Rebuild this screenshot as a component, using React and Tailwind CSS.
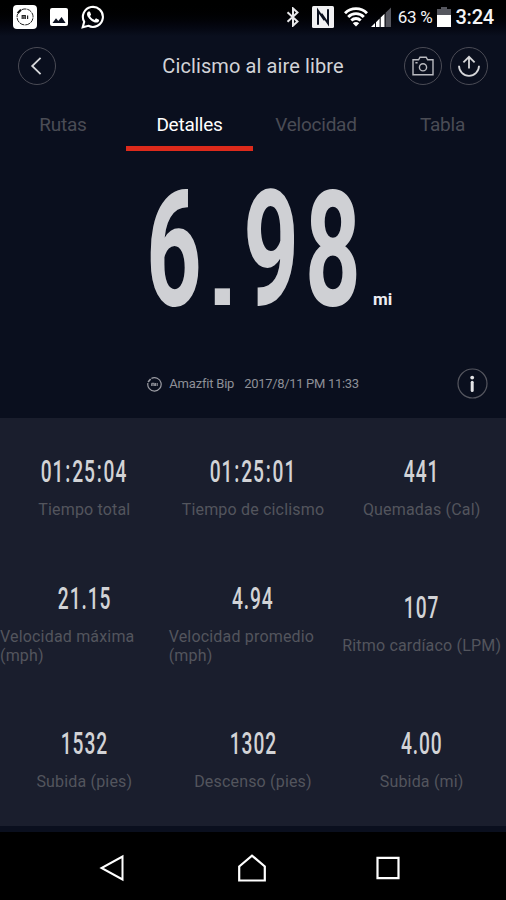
const TABS = ['Rutas', 'Detalles', 'Velocidad', 'Tabla'];

const STATS = [
  { value: '01:25:04', label: 'Tiempo total' },
  { value: '01:25:01', label: 'Tiempo de ciclismo' },
  { value: '441', label: 'Quemadas (Cal)' },
  { value: '21.15', label: 'Velocidad máxima (mph)' },
  { value: '4.94', label: 'Velocidad promedio (mph)' },
  { value: '107', label: 'Ritmo cardíaco (LPM)' },
  { value: '1532', label: 'Subida (pies)' },
  { value: '1302', label: 'Descenso (pies)' },
  { value: '4.00', label: 'Subida (mi)' },
];

function MiFitIcon() {
  return (
    <svg className="w-6 h-6" viewBox="0 0 24 24" fill="none">
      <rect width="24" height="24" rx="4" fill="#fff" />
      <path d="M8.6 4.7A8 8 0 1 1 4.6 9" stroke="#222" strokeWidth="1" strokeDasharray="5 .8" />
      <path d="M4.6 8.2 8 4.8" stroke="#111" strokeWidth="2" />
      <path d="M9.2 14v-3.4h3.1V14M10.8 11.6V14M14.6 10.4V14" stroke="#222" strokeWidth="1.2" />
    </svg>
  );
}

function StatusBar() {
  return (
    <div className="flex h-9 items-center justify-between bg-gradient-to-b from-black to-[#0a0f1e] pb-0.5 pl-[13px] pr-3">
      <div className="flex items-center">
        <MiFitIcon />
        <svg className="ml-[13px] w-[18px] h-[18px]" viewBox="0 0 18 18">
          <rect width="18" height="18" rx="2" fill="#fff" />
          <path d="M2.5 15 6 10.2l2.3 2.7L11.6 9l4 6z" fill="#0a0f1e" />
        </svg>
        <svg className="ml-[13px] w-6 h-6" viewBox="0 0 24 24" fill="#fff">
          <path d="M17.472 14.382c-.297-.149-1.758-.867-2.03-.967-.273-.099-.471-.148-.67.15-.197.297-.767.966-.94 1.164-.173.199-.347.223-.644.075-.297-.15-1.255-.463-2.39-1.475-.883-.788-1.48-1.761-1.653-2.059-.173-.297-.018-.458.13-.606.134-.133.298-.347.446-.52.149-.174.198-.298.298-.497.099-.198.05-.371-.025-.52-.075-.149-.669-1.612-.916-2.207-.242-.579-.487-.5-.669-.51-.173-.008-.371-.01-.57-.01-.198 0-.52.074-.792.372-.272.297-1.04 1.016-1.04 2.479 0 1.462 1.065 2.875 1.213 3.074.149.198 2.096 3.2 5.077 4.487.709.306 1.262.489 1.694.625.712.227 1.36.195 1.871.118.571-.085 1.758-.719 2.006-1.413.248-.694.248-1.289.173-1.413-.074-.124-.272-.198-.57-.347" />
          <path d="M3.2 16.8A10 10 0 1 1 7.4 20.8L1.7 22.3z" fill="none" stroke="#fff" strokeWidth="2.1" />
        </svg>
      </div>

      <div className="flex items-center text-[#f4f4f6]">
        <svg className="w-3.5 h-5" viewBox="0 0 14 20" fill="none" stroke="#e8e8ea" strokeWidth="2">
          <path d="M1.5 5.2 11.5 14.4 7 18.6V1.4l4.5 4.2L1.5 14.8" />
        </svg>
        <svg className="ml-3 w-[22px] h-[22px]" viewBox="0 0 22 22">
          <rect width="22" height="22" rx="1.5" fill="#f1f1f3" />
          <path d="M6 18.8V4.6l6.6 9.6M16 3.2v14.2L9.4 7.8" fill="none" stroke="#0a0f1e" strokeWidth="2" />
        </svg>
        <svg className="ml-2.5 w-6 h-5" viewBox="0 0 24 20" fill="none" stroke="#fff" strokeWidth="2.9">
          <path d="M1 6.2a15.6 15.6 0 0 1 22 0M4.2 9.9a11 11 0 0 1 15.6 0M7.3 13.5a6.7 6.7 0 0 1 9.4 0" />
          <path d="M12 19.5 8.8 16.2a4.6 4.6 0 0 1 6.4 0z" fill="#fff" stroke="none" />
        </svg>
        <svg className="ml-[3px] w-5 h-5" viewBox="0 0 20 20" fill="#fff">
          <path d="M0 20l4-4v4zM5 15.2l3.6-3.6V20H5zM9.7 10.6l3.8-3.8V20H9.7z" />
          <path d="M14.6 5.8 20 .6V20h-5.4z" fill="#55565e" />
        </svg>
        <span className="ml-[7px] text-[17px] leading-5 tracking-[-0.3px]">63 %</span>
        <svg className="ml-[5px] w-3.5 h-5" viewBox="0 0 14 20">
          <path d="M4 0h6v2h4v7H0V2h4z" fill="#55565e" />
          <path d="M0 8h14v12H0z" fill="#fff" />
        </svg>
        <span className="ml-[4px] text-[20px] font-medium leading-5 tracking-[-0.2px]">3:24</span>
      </div>
    </div>
  );
}

function RoundButton({ children }) {
  return (
    <button className="flex h-[38px] w-[38px] items-center justify-center rounded-full border border-[#4a4b55] text-[#d6d7da]">
      {children}
    </button>
  );
}

function Header() {
  return (
    <div className="grid h-[60px] grid-cols-[94px_1fr_94px] items-center pb-px pl-[18px] pr-[18px]">
      <RoundButton>
        <svg className="w-5 h-5" viewBox="0 0 20 20" fill="none" stroke="currentColor" strokeWidth="1.8">
          <path d="M13.6 1.8 5.2 10l8.4 8.2" />
        </svg>
      </RoundButton>
      <h1 className="pt-px text-center text-[20px] leading-6 tracking-[0.1px] text-[#d2d3d7]">Ciclismo al aire libre</h1>
      <div className="flex justify-end gap-2">
        <RoundButton>
          <svg className="w-[22px] h-[20px] shrink-0" viewBox="0 0 22 20" fill="none" stroke="#b9bac0" strokeWidth="1.4">
            <path d="M1 3.8h5.6L8 1.2h6.2l1.4 2.6H21v15H1zM3.4 6.7h2.2" />
            <circle cx="11" cy="11.3" r="3.6" />
          </svg>
        </RoundButton>
        <RoundButton>
          <svg className="w-[22px] h-[22px] shrink-0" viewBox="0 0 22 22" fill="none" stroke="currentColor" strokeWidth="1.8">
            <path d="M1 10.8a10 10 0 0 0 20 0M11 13.4V2M5.4 7.4 11 1.8l5.6 5.6" />
          </svg>
        </RoundButton>
      </div>
    </div>
  );
}

function Tabs({ active }) {
  return (
    <div className="grid h-[55px] grid-cols-[126px_127px_126px_127px]">
      {TABS.map((tab) => (
        <div
          key={tab}
          className={`border-b-5 pt-[17px] text-center text-[19px] leading-6 tracking-[-0.25px] ${
            tab === active ? 'border-[#dd2a1b] text-white' : 'border-transparent text-[#4a4c55]'
          }`}
        >
          {tab}
        </div>
      ))}
    </div>
  );
}

function Distance() {
  return (
    <div className="flex h-[199px] items-start pl-[146px]">
      <div className="w-[220px] whitespace-nowrap pt-[18px]">
        <span className="inline-block origin-left scale-x-[0.6] text-[162px] font-bold leading-[162px] tracking-[10px] text-[#cfd0d4]">
          6
          <span className="ml-[9px] mr-[19px] inline-block scale-x-[1.6] font-['Liberation_Sans'] text-[112px] leading-none tracking-normal">.</span>
          98
        </span>
      </div>
      <span className="ml-[7px] mt-[136px] text-[17px] font-bold leading-6 text-[#eeeef2]">mi</span>
    </div>
  );
}

function Source() {
  return (
    <div className="grid h-[68px] grid-cols-[1fr_auto_1fr] items-center text-[13px] leading-4 text-[#8e9097]">
      <span />
      <div className="flex items-center">
        <svg className="w-[15px] h-[15px]" viewBox="0 0 15 15" fill="none" stroke="#9c9da4">
          <path d="M4.4 1.4A6.7 6.7 0 1 1 .9 6" strokeWidth="1.2" />
          <path d="M1.1 4.9 3.6 2" strokeWidth="1.6" />
          <path d="M4.7 9V6.3h2.6V9M6 7v2M8.6 6v3M10.2 6v3" strokeWidth="1" />
        </svg>
        <span className="ml-[7px] tracking-[-0.2px]">Amazfit Bip</span>
        <span className="ml-2.5 tracking-[-0.32px]">2017/8/11 PM 11:33</span>
      </div>
      <div className="flex justify-end pb-px pr-[18px]">
        <svg className="w-[31px] h-[31px]" viewBox="0 0 31 31" fill="none">
          <circle cx="15.5" cy="15.5" r="14.5" stroke="#55565f" strokeWidth="1.2" />
          <circle cx="15.2" cy="9.6" r="1.9" fill="#e4e4e7" />
          <path d="M15.2 14.2v8.2" stroke="#e4e4e7" strokeWidth="3" strokeLinecap="round" />
        </svg>
      </div>
    </div>
  );
}

function StatValue({ value }) {
  return (
    <span className="inline-block scale-x-[0.6] whitespace-nowrap text-[32px] font-medium leading-[38px] tracking-[1.5px] text-[#d2d3d6]">
      {value.split('').map((ch, i) => (
        <span key={i} className={ch === ':' ? 'mx-[1.5px]' : ''}>{ch}</span>
      ))}
    </span>
  );
}

function StatsGrid() {
  return (
    <div className="grid h-[408px] grid-cols-3 grid-rows-3 bg-[#1a1e2d]">
      {STATS.map((stat) => (
        <div key={stat.label + stat.value} className="flex flex-col items-center justify-center gap-2.5 pb-px">
          <StatValue value={stat.value} />
          <span className="text-[16px] leading-[19px] tracking-[0.18px] text-[#53555d]">{stat.label}</span>
        </div>
      ))}
    </div>
  );
}

function NavBar() {
  return (
    <div className="flex h-[68px] items-center justify-between bg-black pl-[99px] pr-[106px] pt-1">
      <svg className="w-[26px] h-[28px]" viewBox="0 0 26 28" fill="none" stroke="#fff" strokeWidth="2">
        <path d="M23.5 2.5v23L2.5 14z" />
      </svg>
      <svg className="ml-[3px] w-[30px] h-[30px]" viewBox="0 0 30 30" fill="none" stroke="#fff" strokeWidth="2.2">
        <path d="M2.2 13.5 15 2.6l12.8 10.9v14H2.2z" />
      </svg>
      <svg className="w-6 h-6" viewBox="0 0 24 24" fill="none" stroke="#fff" strokeWidth="2.2">
        <path d="M1.5 1.8h21v20.4h-21z" />
      </svg>
    </div>
  );
}

export default function App() {
  return (
    <div className="flex h-[900px] w-[506px] flex-col overflow-hidden bg-[#0a0f1e] font-['Roboto',sans-serif]">
      <StatusBar />
      <Header />
      <Tabs active="Detalles" />
      <Distance />
      <Source />
      <StatsGrid />
      <div className="h-[6px]" />
      <NavBar />
    </div>
  );
}
